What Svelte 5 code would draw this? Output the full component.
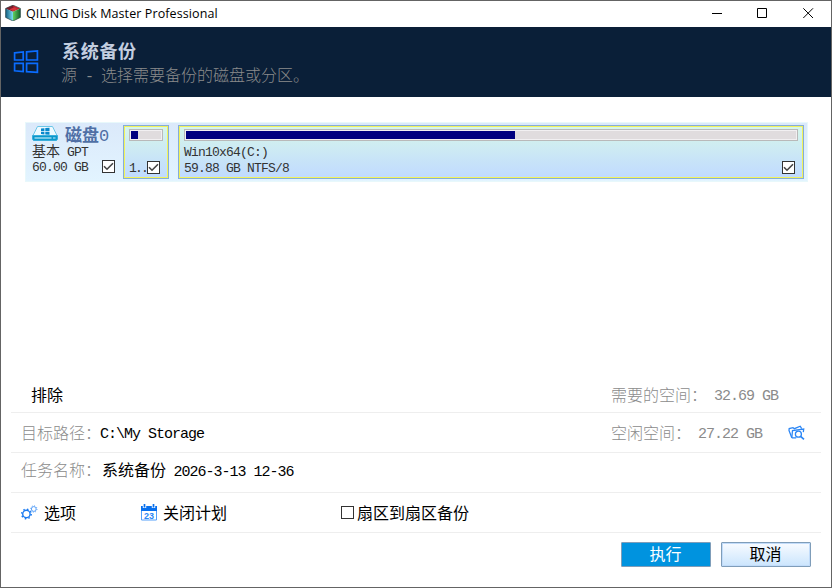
<script lang="ts">
  type Partition = {
    name: string;
    info: string;
    used: number;
    small: boolean;
    checked: boolean;
  };

  let partitions: Partition[] = $state([
    { name: '', info: '1..', used: 24, small: true, checked: true },
    { name: 'Win10x64(C:)', info: '59.88 GB NTFS/8', used: 54, small: false, checked: true },
  ]);
  let diskChecked = $state(true);
  let sectorBySector = $state(false);
</script>

{#snippet checkbox(checked: boolean, toggle: () => void, label: string)}
  <button class="check" role="checkbox" aria-checked={checked} aria-label={label} onclick={toggle}>
    {#if checked}
      <svg width="11" height="11" viewBox="0 0 11 11">
        <path d="M1 5.2 4 8.2 10 2.2" fill="none" stroke="#444" stroke-width="1.6" />
      </svg>
    {/if}
  </button>
{/snippet}

<div class="window">
  <div class="titlebar">
    <svg class="logo" width="16" height="16" viewBox="0 0 16 16">
      <defs>
        <linearGradient id="left-face">
          <stop offset="0" stop-color="#125c80" />
          <stop offset="1" stop-color="#7be0f2" />
        </linearGradient>
        <linearGradient id="right-face">
          <stop offset="0" stop-color="#62d060" />
          <stop offset="1" stop-color="#12602a" />
        </linearGradient>
      </defs>
      <path d="M8 .2 15.4 3.4 8 6.8 .6 3.4z" fill="#c4242f" />
      <path d="M8 .2 .6 3.4 8 6.8 9 4z" fill="#7c1c2a" />
      <path d="M4.5 4.2 9 2.4 12.5 4 8 6.2z" fill="#d8343c" />
      <path d="M.6 3.4 8 6.8V16L.6 12.4z" fill="url(#left-face)" />
      <path d="M8 6.8 15.4 3.4v9L8 16z" fill="url(#right-face)" />
      <path d="M.6 3.4 8 .2l7.4 3.2v9L8 16 .6 12.4z" fill="none" stroke="#2a4548" stroke-width=".7" />
    </svg>
    <span class="caption">QILING Disk Master Professional</span>
    <div class="controls">
      <svg width="11" height="11" viewBox="0 0 11 11"><path d="M1 5.5h10" stroke="#000" /></svg>
      <svg width="11" height="11" viewBox="0 0 11 11"><path d="M.5.5h9v9h-9z" fill="none" stroke="#000" /></svg>
      <svg width="11" height="11" viewBox="0 0 11 11"><path d="M.3.3 10 10M10 .3.3 10" stroke="#000" /></svg>
    </div>
  </div>

  <header>
    <svg width="26" height="24" viewBox="0 0 26 24">
      <path
        d="M1.6 2.8 10.2 2v8H1.6zM13.6 1.8 24.4 1v9H13.6zM1.6 13.4h8.6v8.2L1.6 20.8zM13.6 13.4h10.8v9l-10.8-.8z"
        fill="none"
        stroke="#0a6cff"
        stroke-width="1.7"
      />
    </svg>
    <div class="heading">
      <h1>系统备份</h1>
      <p>源 <span class="latin">-</span> 选择需要备份的磁盘或分区。</p>
    </div>
  </header>

  <main>
    <div class="disk">
      <div class="disk-info">
        <div class="disk-name">
          <svg width="26" height="15" viewBox="0 0 26 15">
            <path d="M5.5.5h15L25 9.5H1z" fill="#effaff" stroke="#6cc6e8" />
            <path d="M.5 9.5h25V13l-1 1.5h-23L.5 13z" fill="#0b98cc" stroke="#3aaedb" />
            <path d="M2.5 12h17" stroke="#e6faff" />
            <path d="M21 12h2.5" stroke="#bfeeff" />
            <path d="M9 2.6l3.4-.4v2.7H9zM13.3 2.1l4.2-.4v3.2h-4.2zM9 5.7h3.4v2.7L9 8.1zM13.3 5.7h4.2v3l-4.2-.3z" fill="#0888cc" />
          </svg>
          <strong>磁盘<span class="latin">0</span></strong>
        </div>
        <div class="line type">基本<span class="latin">GPT</span></div>
        <div class="line size">
          <span class="latin">60.00 GB</span>
          {@render checkbox(diskChecked, () => (diskChecked = !diskChecked), '磁盘0')}
        </div>
      </div>

      {#each partitions as part}
        <div class="partition" class:small={part.small}>
          <div class="usage"><div class="used" style="width: {part.used}%"></div></div>
          <div class="line latin">{part.name}</div>
          <div class="line bottom">
            <span class="latin">{part.info}</span>
            {@render checkbox(part.checked, () => (part.checked = !part.checked), part.info)}
          </div>
        </div>
      {/each}
    </div>
  </main>

  <section class="rows">
    <div class="row exclude">
      <span>排除</span>
      <div class="space">需要的空间：<span class="latin need">32.69 GB</span></div>
    </div>
    <div class="row">
      <span class="label">目标路径：</span>
      <span class="latin path">C:\My Storage</span>
      <div class="space">
        空闲空间：<span class="latin free">27.22 GB</span>
        <svg class="browse" width="17" height="15" viewBox="0 0 17 15">
          <path d="M3.8 12.8 1 5.5l.2-2L5 2.7l1.4 1 5.8-2.5 1.5 2.4" fill="none" stroke="#2b86f5" stroke-width="1.3" />
          <path d="M3.8 12.8 4.5 5.5l11.2-1.4-.4 3M3.8 12.8h4.4" fill="none" stroke="#2b86f5" stroke-width="1.3" />
          <circle cx="10.4" cy="9.2" r="3" fill="none" stroke="#2b86f5" stroke-width="1.3" />
          <path d="M12.6 11.3 16 14.3" stroke="#2b86f5" stroke-width="1.7" />
        </svg>
      </div>
    </div>
    <div class="row task">
      <span class="label">任务名称：</span>
      <span class="value">系统备份 <span class="latin">2026-3-13 12-36</span></span>
    </div>
    <div class="row options">
      <div class="option gear">
        <svg width="17" height="15" viewBox="0 0 17 15">
          <circle cx="5.4" cy="9" r="3.7" fill="none" stroke="#1a7af0" stroke-width="1.4" />
          <circle cx="5.4" cy="9" r="4.8" fill="none" stroke="#1a7af0" stroke-width="1.5" stroke-dasharray="1.5 2.27" />
          <circle cx="12.8" cy="4" r="2.4" fill="none" stroke="#58a0f8" />
          <circle cx="12.8" cy="4" r="3.2" fill="none" stroke="#58a0f8" stroke-dasharray="1 1.5" />
        </svg>
        <span>选项</span>
      </div>
      <div class="option plan">
        <svg width="16" height="17" viewBox="0 0 16 17">
          <path d="M.5 3h15v13H.5z" fill="#fff" stroke="#55a0fa" />
          <path d="M0 2h16v5H0z" fill="#0870ee" />
          <path d="M3.5 0v4M12.5 0v4" stroke="#fff" stroke-width="3.4" />
          <path d="M3.5 0v3.5M12.5 0v3.5" stroke="#0870ee" stroke-width="1.7" />
          <text x="8" y="14.6" text-anchor="middle">23</text>
        </svg>
        <span>关闭计划</span>
      </div>
      <div class="option">
        {@render checkbox(sectorBySector, () => (sectorBySector = !sectorBySector), '扇区到扇区备份')}
        <span>扇区到扇区备份</span>
      </div>
    </div>
  </section>

  <footer>
    <button class="btn primary">执行</button>
    <button class="btn">取消</button>
  </footer>
</div>

<style>
  :global(body) {
    margin: 0;
    overflow: hidden;
  }

  .window {
    width: 832px;
    height: 588px;
    box-sizing: border-box;
    border: 1px solid #646464;
    background: #fff;
    display: flex;
    flex-direction: column;
    font-family: "Noto Sans CJK SC", sans-serif;
    font-size: 16px;
    font-weight: 300;
    color: #000;
  }

  svg {
    flex: none;
    display: block;
  }

  .latin {
    font-family: "Liberation Mono", monospace;
    font-size: 15px;
    letter-spacing: -1px;
    white-space: pre;
  }

  .titlebar {
    height: 26px;
    flex: none;
    box-sizing: border-box;
    display: flex;
    align-items: center;
    padding: 0 17px 2px 4px;
  }

  .caption {
    font-family: "Open Sans", "Noto Sans", sans-serif;
    font-size: 12.5px;
    font-weight: 400;
    letter-spacing: 0.1px;
    margin-left: 5px;
    white-space: nowrap;
  }

  .controls {
    margin-left: auto;
    display: flex;
    gap: 35px;
  }

  header {
    height: 70px;
    flex: none;
    box-sizing: border-box;
    display: flex;
    padding: 23px 0 0 12px;
    background: #0a1f38;
  }

  .heading {
    margin: -12px 0 0 22px;
  }

  h1 {
    margin: 0 0 0 1px;
    font-size: 18px;
    line-height: 24px;
    font-weight: 600;
    letter-spacing: 0.7px;
    color: #c3cee0;
  }

  p {
    margin: 0;
    line-height: 25px;
    color: #8b8b8b;
    word-spacing: 4.4px;
  }

  p .latin {
    word-spacing: 0;
  }

  main {
    flex: 1;
    padding: 25px 23px 0 24px;
  }

  .disk {
    height: 60px;
    box-sizing: border-box;
    display: flex;
    padding: 2px 3px 2px 6px;
    border: 1px solid #e8f8fb;
    background: linear-gradient(#dbe9fa, #e2f4ff);
    color: #333;
    font-size: 14px;
  }

  .disk .latin {
    font-size: 13px;
    letter-spacing: -0.8px;
  }

  .disk-info {
    width: 91px;
    flex: none;
  }

  .disk-name {
    height: 17px;
    display: flex;
    align-items: center;
    gap: 7px;
  }

  .disk-name strong {
    font-size: 17px;
    line-height: 17px;
    padding-top: 2px;
    font-weight: 600;
    color: #4f6fa5;
  }

  .disk .disk-name .latin {
    font-size: 17px;
    font-weight: 400;
  }

  .line {
    height: 17px;
    line-height: 17px;
    white-space: nowrap;
  }

  .type {
    font-weight: 400;
  }

  .type .latin {
    margin-left: 7px;
  }

  .size,
  .bottom {
    display: flex;
    align-items: center;
  }

  .size .check {
    margin: -2px 0 0 14px;
  }

  .check {
    width: 13px;
    height: 13px;
    flex: none;
    box-sizing: border-box;
    padding: 0;
    border: 1px solid #333;
    background: #fff;
  }

  .partition {
    flex: 1;
    box-sizing: border-box;
    border: 1px solid #86add8;
    box-shadow: inset 0 0 0 1px #f2f25a;
    background: linear-gradient(#d7f7ea, #c0daff);
    padding: 3px 5px 0;
  }

  .partition.small {
    flex: none;
    width: 46px;
    margin-right: 9px;
  }

  .usage {
    height: 12px;
    box-sizing: border-box;
    border: 1px solid #b9b9b9;
    background: #e0dcde;
    padding: 1px;
    margin-bottom: 3px;
    box-shadow: inset 0 0 0 1px #f2f0f2;
  }

  .used {
    height: 8px;
    background: #000080;
  }

  .bottom {
    margin-top: -1px;
  }

  .bottom .check {
    margin: -2px 3px 0 auto;
  }

  .small .bottom .latin {
    width: 18px;
    letter-spacing: -1.8px;
  }

  .small .bottom .check {
    margin-left: 0;
  }

  .rows {
    margin: 0 10px;
    font-weight: 400;
  }

  .row {
    height: 40px;
    box-sizing: border-box;
    display: flex;
    align-items: center;
    padding: 0 0 1px 10px;
    border-bottom: 1px solid #eee;
    white-space: nowrap;
  }

  .exclude {
    padding: 3px 0 0 20px;
  }

  .task {
    padding-bottom: 7px;
  }

  .label,
  .space {
    color: #8b8b8b;
    font-weight: 300;
  }

  .label {
    width: 79px;
  }

  .path {
    padding-top: 4px;
  }

  .value {
    margin-left: 2px;
  }

  .value .latin {
    margin-left: 4px;
  }

  .space {
    width: 210px;
    margin-left: auto;
    display: flex;
    align-items: center;
  }

  .need,
  .free {
    margin-left: 7px;
    padding-top: 4px;
  }

  .browse {
    margin-left: 26px;
  }

  .option {
    display: flex;
    align-items: center;
  }

  .option span {
    margin-top: -1px;
  }

  .gear {
    width: 120px;
    gap: 6px;
  }

  .plan {
    width: 200px;
    gap: 6px;
  }

  .plan text {
    font: bold 9px "Liberation Sans", sans-serif;
    fill: #2b86f5;
  }

  .option .check {
    margin: 0 3px 0 0;
  }

  footer {
    height: 54px;
    flex: none;
    box-sizing: border-box;
    display: flex;
    justify-content: flex-end;
    gap: 10px;
    padding: 9px 20px 0 0;
  }

  .btn {
    width: 90px;
    height: 25px;
    box-sizing: border-box;
    padding: 0 1px 3px 0;
    border: 1px solid #7f9db9;
    border-radius: 1px;
    background: linear-gradient(#f8fbff, #cbe5fd);
    box-shadow: inset 0 0 0 1px #c2dcfa;
    font: inherit;
    font-weight: 400;
    line-height: 20px;
    color: #000;
  }

  .primary {
    background: #0093df;
    box-shadow: none;
    color: #fff;
  }
</style>
